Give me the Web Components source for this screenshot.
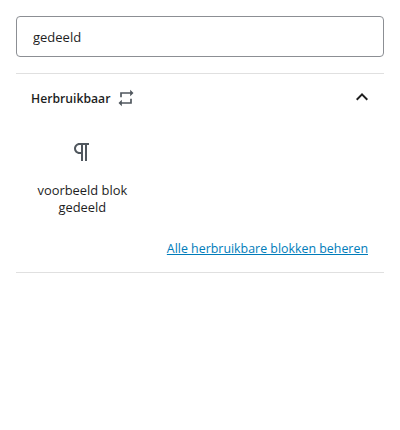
<!DOCTYPE html>
<html><head><meta charset="utf-8"><style>
html,body{margin:0;background:#fff}
body{font-family:"Open Sans","Noto Sans",sans-serif;font-size:13px;color:#1e1e1e}
</style></head><body>
<block-inserter>
<search-box slot="search" value="gedeeld"></search-box>
<reusable-panel title="Herbruikbaar">
<block-item label="voorbeeld blok gedeeld"></block-item>
<a slot="footer" href="#">Alle herbruikbare blokken beheren</a>
</reusable-panel>
</block-inserter>
<script>
function def(name,html,init){customElements.define(name,class extends HTMLElement{connectedCallback(){if(this.shadowRoot)return;const r=this.attachShadow({mode:'open'});r.innerHTML=html;if(init)init(this,r);}});}
def('block-inserter',`<style>:host{display:flex;flex-direction:column;padding:16px 16px 0;width:368px}
.s{display:block;margin-bottom:16px}</style><div class="s"><slot name="search"></slot></div><slot></slot>`);
def('search-box',`<style>:host{display:block}
input{display:block;box-sizing:border-box;width:368px;height:41px;padding:0 16px;border:1px solid #8c8f94;border-radius:4px;font:13px "Open Sans","Noto Sans",sans-serif;color:#1e1e1e;background:#fff;outline:0;margin:0}</style><input type="text">`,(h,r)=>{r.querySelector('input').setAttribute('value',h.getAttribute('value'))});
def('reusable-panel',`<style>:host{display:block;border-top:1px solid #e0e0e0;border-bottom:1px solid #e0e0e0}
header{display:flex;align-items:center;height:48px;padding:0 10px 0 15px;font-weight:600;font-size:12.2px}
.t{margin-right:6px}
svg{display:block;fill:currentColor}
.rep{color:#50575e;margin-top:-1px}
.chev{margin-left:auto;color:#1e1e1e;margin-top:-2px}
.grid{display:grid;grid-template-columns:repeat(3,1fr);margin-top:18px}
.foot{display:flex;justify-content:flex-end;padding:0 16px 14px;margin-top:24px;line-height:18px;font-size:12.4px}
::slotted(a){color:#007cba;text-decoration:underline}
</style><header><span class="t"></span><svg class="rep" width="20" height="20" viewBox="0 0 24 24"><path d="M7 7h10v3l4-4-4-4v3H5v6h2V7zm10 10H7v-3l-4 4 4 4v-3h12v-6h-2v4z"/></svg><svg class="chev" width="24" height="24" viewBox="0 0 24 24"><path d="M12 8l-6 6 1.41 1.41L12 10.83l4.59 4.58L18 14z"/></svg></header><div class="grid"><slot></slot></div><div class="foot"><slot name="footer"></slot></div>`,(h,r)=>{r.querySelector('.t').textContent=h.getAttribute('title')});
def('block-item',`<style>:host{display:flex;flex-direction:column;align-items:center;color:#1e1e1e;padding-left:10px}
svg{display:block;fill:#50575e;margin-bottom:18px}
.l{text-align:center;line-height:17px;font-size:12.9px;width:100px}
</style><svg width="24" height="24" viewBox="0 0 24 24"><path fill-rule="evenodd" d="M11 5v7H9.5C7.6 12 6 10.4 6 8.5S7.6 5 9.5 5H11zm8-2H9.5C6.5 3 4 5.5 4 8.5S6.5 14 9.5 14H11v7h2V5h2v16h2V5h2V3z"/></svg><div class="l"></div>`,(h,r)=>{r.querySelector('.l').textContent=h.getAttribute('label')});
</script></body></html>
